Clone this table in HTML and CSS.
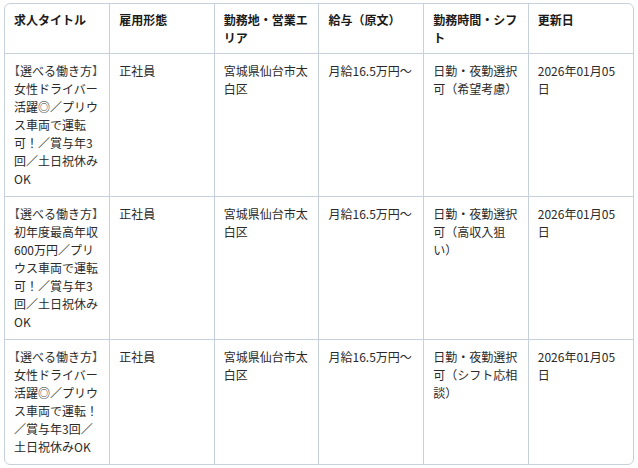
FILE: index.html
```html
<!DOCTYPE html>
<html lang="ja">
<head>
<meta charset="utf-8">
<link rel="stylesheet" href="styles.css">
</head>
<body>
<div class="wrap">
<table class="jobs">
<thead>
<tr>
<th>求人タイトル</th>
<th>雇用形態</th>
<th>勤務地・営業エリア</th>
<th>給与（原文）</th>
<th>勤務時間・シフト</th>
<th>更新日</th>
</tr>
</thead>
<tbody>
<tr>
<td><span class="bk">【</span>選べる働き方<span class="bk">】</span>女性ドライバー活躍◎／プリウス車両で運転可！／賞与年3回／土日祝休みOK</td>
<td>正社員</td>
<td>宮城県仙台市太白区</td>
<td>月給16.5万円〜</td>
<td>日勤・夜勤選択可（希望考慮）</td>
<td>2026年01月05日</td>
</tr>
<tr>
<td><span class="bk">【</span>選べる働き方<span class="bk">】</span>初年度最高年収600万円／プリウス車両で運転可！／賞与年3回／土日祝休みOK</td>
<td>正社員</td>
<td>宮城県仙台市太白区</td>
<td>月給16.5万円〜</td>
<td>日勤・夜勤選択可（高収入狙い）</td>
<td>2026年01月05日</td>
</tr>
<tr>
<td><span class="bk">【</span>選べる働き方<span class="bk">】</span>女性ドライバー活躍◎／プリウス車両で運転！／賞与年3回／土日祝休みOK</td>
<td>正社員</td>
<td>宮城県仙台市太白区</td>
<td>月給16.5万円〜</td>
<td>日勤・夜勤選択可（シフト応相談）</td>
<td>2026年01月05日</td>
</tr>
</tbody>
</table>
</div>
</body>
</html>
```
FILE: styles.css
```css
html, body {
  margin: 0;
  padding: 0;
  background: #ffffff;
}
body {
  padding: 3px 4px;
  font-family: "Noto Sans CJK JP", "Noto Sans", sans-serif;
  font-size: 12px;
  line-height: 18px;
  color: #2a2a2a;
}
.wrap {
  width: 630px;
  border: 1px solid #c6d1db;
  border-radius: 6px;
  overflow: hidden;
  box-sizing: border-box;
}
.jobs {
  width: 100%;
  border-collapse: collapse;
  table-layout: fixed;
}
.jobs th, .jobs td {
  border-right: 1px solid #c6d1db;
  border-bottom: 1px solid #c6d1db;
  padding: 8px 8px 8px 9px;
  text-align: left;
  vertical-align: top;
  word-break: break-all;
}
.jobs th {
  padding-top: 7px;
  padding-bottom: 6px;
  font-weight: 700;
  color: #1a1a1a;
}
.jobs th:last-child, .jobs td:last-child {
  border-right: none;
}
.jobs tbody tr:last-child td {
  border-bottom: none;
}
.bk {
  font-feature-settings: "halt";
  font-weight: 300;
  color: #555555;
}
```
